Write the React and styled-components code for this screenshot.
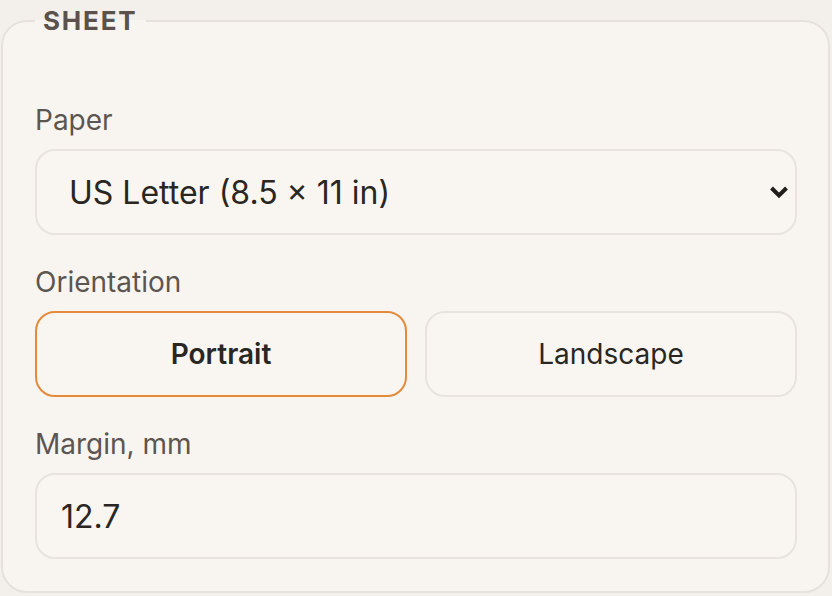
import React from "react";
import styled, { createGlobalStyle } from "styled-components";

const Global = createGlobalStyle`
  html, body { margin: 0; padding: 0; background: #f3f0eb; }
  body { font-family: Inter, "Noto Sans", sans-serif; }
  * { box-sizing: border-box; }
`;

const Page = styled.div`
  padding: 0 2px 3px 1px;
`;

const Sheet = styled.fieldset`
  margin: 0;
  padding: 62px 31px 32px 32px;
  border: 2px solid #e6e1db;
  border-radius: 26px;
  background: #f8f5f1;
  display: flex;
  flex-direction: column;
  gap: 31px;
  min-width: 0;
`;

const Legend = styled.legend`
  padding: 0 8px;
  line-height: 42px;
  font-size: 26px;
  font-weight: 700;
  letter-spacing: 0.07em;
  color: #5a524b;
  text-transform: uppercase;
`;

const Field = styled.div`
  display: flex;
  flex-direction: column;
  gap: 13px;
`;

const Label = styled.label`
  font-size: 28px;
  line-height: 32px;
  color: #5d5550;
`;

const SelectWrap = styled.div`
  position: relative;
`;

const Select = styled.select`
  appearance: none;
  -webkit-appearance: none;
  width: 100%;
  height: 86px;
  margin: 0;
  padding: 0 60px 0 32px;
  border: 2px solid #e8e3dd;
  border-radius: 20px;
  background: #f9f6f2;
  font-family: inherit;
  font-size: 32px;
  color: #2a2622;
  outline: none;
`;

const Chevron = styled.svg`
  position: absolute;
  right: 8px;
  top: 50%;
  width: 20px;
  height: 14px;
  transform: translateY(-50%);
  pointer-events: none;
`;

const Toggle = styled.div`
  display: grid;
  grid-template-columns: 1fr 1fr;
  gap: 18px;
`;

const Option = styled.button`
  height: 86px;
  margin: 0;
  border: 2px solid ${(p) => (p.$active ? "#e48a3b" : "#e8e3dd")};
  border-radius: 20px;
  background: #f9f6f2;
  font-family: inherit;
  font-size: 28px;
  font-weight: ${(p) => (p.$active ? 600 : 400)};
  color: #2a2622;
  cursor: pointer;
`;

const Input = styled.input`
  width: 100%;
  height: 86px;
  margin: 0;
  padding: 0 24px;
  border: 2px solid #e8e3dd;
  border-radius: 20px;
  background: #f9f6f2;
  font-family: inherit;
  font-size: 32px;
  color: #2a2622;
  outline: none;
`;

export default function App() {
  const [orientation, setOrientation] = React.useState("portrait");
  return (
    <Page>
      <Global />
      <Sheet>
        <Legend>Sheet</Legend>
        <Field>
          <Label htmlFor="paper">Paper</Label>
          <SelectWrap>
            <Select id="paper" defaultValue="letter">
              <option value="letter">US Letter (8.5 × 11 in)</option>
              <option value="a4">A4 (210 × 297 mm)</option>
            </Select>
            <Chevron viewBox="0 0 20 14">
              <polyline
                points="2.5,3 10,10.5 17.5,3"
                fill="none"
                stroke="#221e1b"
                strokeWidth="4"
                strokeLinejoin="miter"
              />
            </Chevron>
          </SelectWrap>
        </Field>
        <Field>
          <Label>Orientation</Label>
          <Toggle>
            <Option
              $active={orientation === "portrait"}
              onClick={() => setOrientation("portrait")}
            >
              Portrait
            </Option>
            <Option
              $active={orientation === "landscape"}
              onClick={() => setOrientation("landscape")}
            >
              Landscape
            </Option>
          </Toggle>
        </Field>
        <Field>
          <Label htmlFor="margin">Margin, mm</Label>
          <Input id="margin" defaultValue="12.7" />
        </Field>
      </Sheet>
    </Page>
  );
}
